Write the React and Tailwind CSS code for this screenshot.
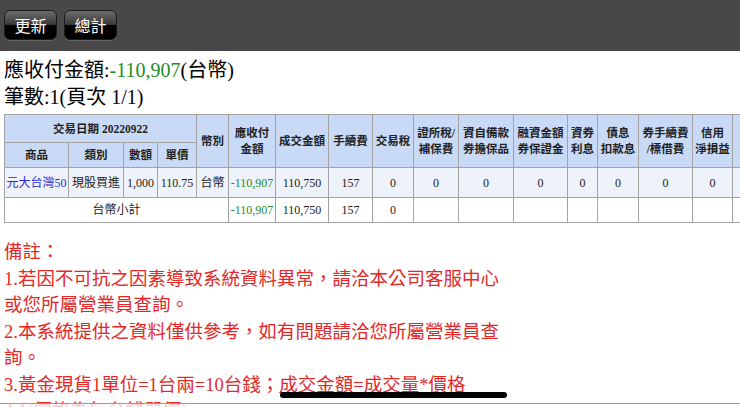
import React from 'react';

const FONT = { fontFamily: '"Liberation Serif", "Noto Sans CJK TC", serif' };

const cols = [64, 55, 34, 39, 32, 47, 53, 44, 41, 45, 55, 54, 30, 41, 54, 40, 60];

const th = 'border border-[#a3a3a3] bg-[#c8daf6] px-[2px] text-center font-bold text-[11.5px] leading-[16px] text-[#222]';
const td = 'border border-[#a3a3a3] px-[1px] text-center text-[12px] whitespace-nowrap';
const dark = 'text-[#222]';
const green = 'text-[#1f8c1f]';

function GlossButton({ children }) {
  return (
    <button
      type="button"
      className="h-[30px] w-[53px] rounded-[6px] border border-[#1c1c1c] bg-[linear-gradient(to_bottom,#6b6b6b_0%,#3b3b3b_48%,#050505_50%,#000_100%)] text-[16px] text-white shadow-[0_1px_0_rgba(255,255,255,0.15)]"
      style={{ fontFamily: '"Noto Sans CJK TC", sans-serif' }}
    >
      {children}
    </button>
  );
}

export default function App() {
  const zeros = Array.from({ length: 9 }, (_, i) => i);
  const blanks = Array.from({ length: 8 }, (_, i) => i);

  return (
    <div className="relative h-[407px] w-[740px] overflow-hidden bg-white" style={FONT}>
      <div className="flex h-[51px] items-start gap-[7px] bg-[#484848] px-[4px] pt-[10px]">
        <GlossButton>更新</GlossButton>
        <GlossButton>總計</GlossButton>
      </div>

      <div className="px-[4px] pt-[6px]">
        <p className="text-[20px] leading-[27px] text-black">
          應收付金額:<span className={green}>-110,907</span>(台幣)
        </p>
        <p className="text-[20px] leading-[27px] text-black">筆數:1(頁次 1/1)</p>

        <table className="mt-[3px] w-[788px] table-fixed border-collapse">
          <colgroup>
            {cols.map((w, i) => (
              <col key={i} style={{ width: w }} />
            ))}
          </colgroup>
          <thead>
            <tr className="h-[28px]">
              <th colSpan={4} className={th}>交易日期 20220922</th>
              <th rowSpan={2} className={th}>幣別</th>
              <th rowSpan={2} className={th}>應收付<br />金額</th>
              <th rowSpan={2} className={th}>成交金額</th>
              <th rowSpan={2} className={th}>手續費</th>
              <th rowSpan={2} className={th}>交易稅</th>
              <th rowSpan={2} className={th}>證所稅/<br />補保費</th>
              <th rowSpan={2} className={th}>資自備款<br />券擔保品</th>
              <th rowSpan={2} className={th}>融資金額<br />券保證金</th>
              <th rowSpan={2} className={th}>資券<br />利息</th>
              <th rowSpan={2} className={th}>債息<br />扣款息</th>
              <th rowSpan={2} className={th}>券手續費<br />/標借費</th>
              <th rowSpan={2} className={th}>信用<br />淨損益</th>
              <th rowSpan={2} className={th}>融資<br />自備款</th>
            </tr>
            <tr className="h-[25px]">
              <th className={th}>商品</th>
              <th className={th}>類別</th>
              <th className={th}>數額</th>
              <th className={th}>單價</th>
            </tr>
          </thead>
          <tbody>
            <tr className="h-[30px] bg-[#eef3fb]">
              <td className={`${td} text-[#2a2ad0]`}>元大台灣50</td>
              <td className={`${td} ${dark}`}>現股買進</td>
              <td className={`${td} ${dark}`}>1,000</td>
              <td className={`${td} ${dark}`}>110.75</td>
              <td className={`${td} ${dark}`}>台幣</td>
              <td className={`${td} ${green}`}>-110,907</td>
              <td className={`${td} ${dark}`}>110,750</td>
              <td className={`${td} ${dark}`}>157</td>
              {zeros.map((i) => (
                <td key={i} className={`${td} ${dark}`}>0</td>
              ))}
            </tr>
            <tr className="h-[25px] bg-white">
              <td colSpan={5} className={`${td} ${dark}`}>台幣小計</td>
              <td className={`${td} ${green}`}>-110,907</td>
              <td className={`${td} ${dark}`}>110,750</td>
              <td className={`${td} ${dark}`}>157</td>
              <td className={`${td} ${dark}`}>0</td>
              {blanks.map((i) => (
                <td key={i} className={td}></td>
              ))}
            </tr>
          </tbody>
        </table>

        <div className="mt-[16px] w-[508px] text-[18.5px] leading-[26.5px] text-[#e42828]">
          <p>備註：</p>
          <p>1.若因不可抗之因素導致系統資料異常，請洽本公司客服中心或您所屬營業員查詢。</p>
          <p>2.本系統提供之資料僅供參考，如有問題請洽您所屬營業員查詢。</p>
          <p>
            3.黃金現貨1單位=1台兩=10台錢；<span className="underline">成交金額=成交量*價格</span>
          </p>
          <p>4.1(價格為每台錢單價)</p>
        </div>
      </div>

      {/* home indicator + bottom bar */}
      <div className="absolute left-[280px] top-[392px] h-[6px] w-[227px] rounded-full bg-black" />
      <div className="absolute left-0 top-[403px] h-[4px] w-full border-t border-[#9a9a9a] bg-white/75" />
    </div>
  );
}
